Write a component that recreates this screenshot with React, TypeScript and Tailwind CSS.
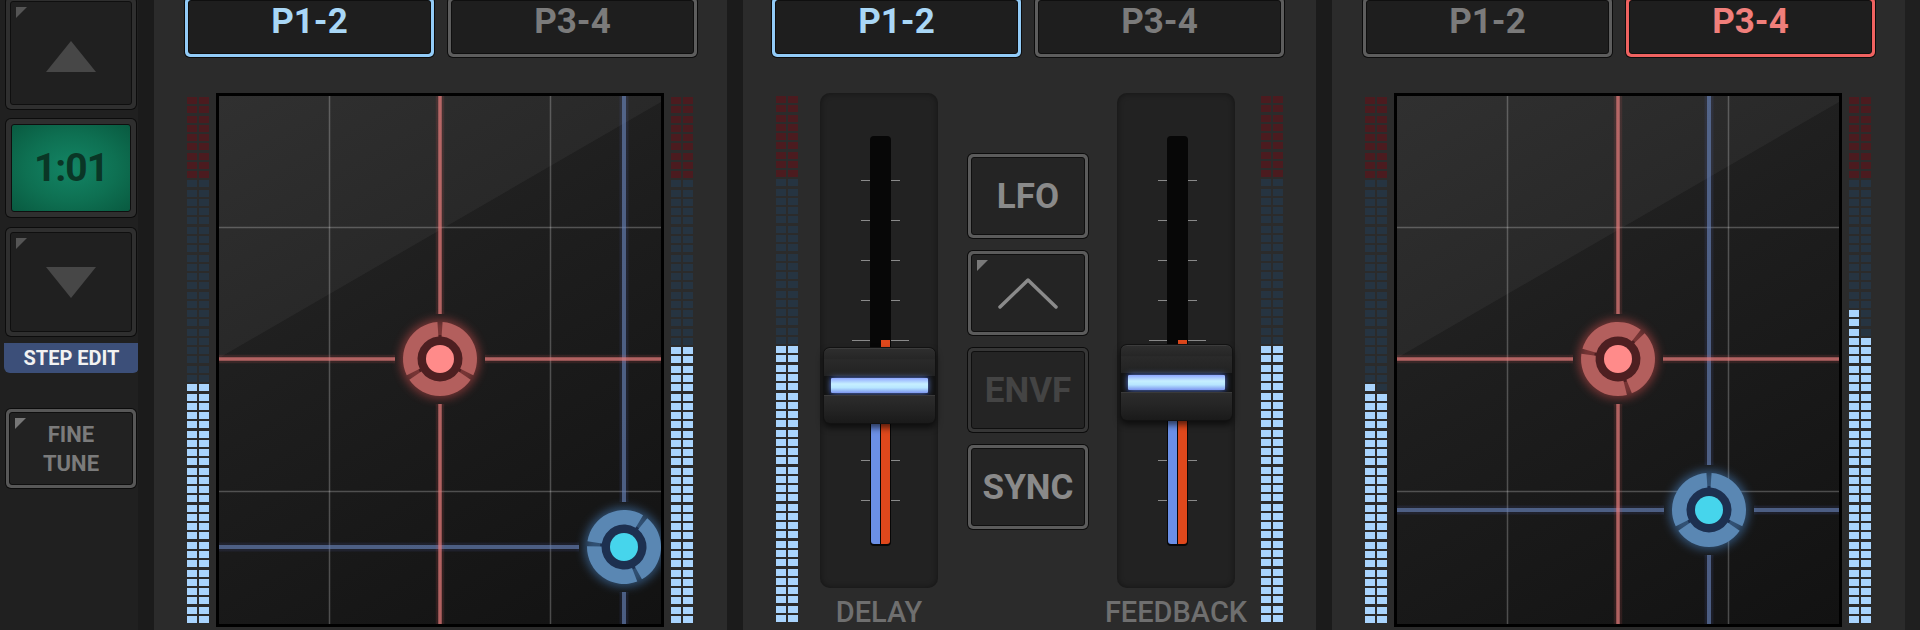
import React from 'react';

// meter layout
const SEG = 57;
const RED_SEGS = 9;

const arc = (cx: number, cy: number, r1: number, r2: number, a1: number, a2: number) => {
  const rad = (a: number) => (a * Math.PI) / 180;
  const p = (r: number, a: number) =>
    `${(cx + r * Math.cos(rad(a))).toFixed(2)} ${(cy + r * Math.sin(rad(a))).toFixed(2)}`;
  const large = a2 - a1 > 180 ? 1 : 0;
  return `M${p(r2, a1)} A${r2} ${r2} 0 ${large} 1 ${p(r2, a2)} L${p(r1, a2)} A${r1} ${r1} 0 ${large} 0 ${p(r1, a1)} Z`;
};

function MeterColumn({ lit }: { lit: number }) {
  return (
    <div className="flex h-full w-[10px] flex-col justify-between">
      {Array.from({ length: SEG }).map((_, i) => {
        const fromBottom = SEG - 1 - i;
        let cls = 'bg-[#263441]';
        if (i < RED_SEGS) cls = 'bg-[#4b1b1f]';
        if (fromBottom < lit) cls = 'bg-[#a9d4fd]';
        return <div key={i} className={`h-[7px] w-full ${cls}`} />;
      })}
    </div>
  );
}

function Meter({ lit }: { lit: [number, number] }) {
  return (
    <div className="flex h-[526px] shrink-0 gap-[2px]">
      <MeterColumn lit={lit[0]} />
      <MeterColumn lit={lit[1]} />
    </div>
  );
}

interface BevelProps {
  frame: string;
  inner?: string;
  pad?: string;
  className?: string;
  children?: React.ReactNode;
}

function Bevel({ frame, inner = 'bg-[#212121]', pad = 'p-[4px]', className = '', children }: BevelProps) {
  return (
    <div className={`shrink-0 rounded-[6px] bg-[#0c0c0c] p-px ${className}`}>
      <div className={`h-full rounded-[5px] ${pad} ${frame}`}>
        <div className={`relative flex h-full items-center justify-center rounded-[3px] border border-[#0f0f0f] ${inner}`}>
          {children}
        </div>
      </div>
    </div>
  );
}

const Corner = ({ color = 'border-t-[#555555]' }: { color?: string }) => (
  <div className={`absolute left-[5px] top-[5px] h-0 w-0 border-r-[11px] border-t-[11px] border-r-transparent ${color}`} />
);

function Tab({ label, active }: { label: string; active?: 'blue' | 'red' }) {
  const frame = active === 'blue' ? 'bg-[#92cbf7]' : active === 'red' ? 'bg-[#ef6260]' : 'bg-[#5d5d5d]';
  const text = active === 'blue' ? 'text-[#a9d7f6]' : active === 'red' ? 'text-[#f07f7b]' : 'text-[#7b7b7b]';
  return (
    <Bevel frame={frame} pad="p-[3px]" inner="bg-[#1e1e1e]" className="h-[62px] w-[251px]">
      <span className={`pb-[11px] text-[35px] font-bold leading-none ${text}`}>{label}</span>
    </Bevel>
  );
}

type PuckPos = { x: number; y: number; rot: number };

function Puck({ p, ring, dark, dot, glow, fid }: { p: PuckPos; ring: string; dark: string; dot: string; glow: string; fid: string }) {
  const segs = [0, 1, 2].map((i) => arc(p.x, p.y, 22.5, 37, p.rot + i * 120 + 4, p.rot + (i + 1) * 120 - 4));
  return (
    <g>
      <circle cx={p.x} cy={p.y} r={40} fill={glow} opacity={0.4} filter={`url(#${fid})`} />
      <circle cx={p.x} cy={p.y} r={24} fill={dark} />
      {segs.map((d, i) => (
        <path key={i} d={d} fill={ring} />
      ))}
      <circle cx={p.x} cy={p.y} r={14} fill={dot} />
    </g>
  );
}

function Cross({ p, color, glow, width, W, H }: { p: PuckPos; color: string; glow: string; width: number; W: number; H: number }) {
  const g = 45;
  const lines = (
    <>
      <line x1={p.x} y1={0} x2={p.x} y2={p.y - g} />
      <line x1={p.x} y1={p.y + g} x2={p.x} y2={H} />
      <line x1={0} y1={p.y} x2={p.x - g} y2={p.y} />
      <line x1={p.x + g} y1={p.y} x2={W} y2={p.y} />
    </>
  );
  return (
    <>
      <g stroke={glow} strokeWidth={width + 5}>{lines}</g>
      <g stroke={color} strokeWidth={width}>{lines}</g>
    </>
  );
}

function XYPad({ id, red, blue }: { id: string; red: PuckPos; blue: PuckPos }) {
  const W = 442;
  const H = 528;
  return (
    <div className="h-[534px] w-[448px] shrink-0 overflow-hidden border-[3px] border-black bg-[linear-gradient(150deg,#272727_0%,#1d1d1d_45%,#121212_100%)]">
      <svg width={W} height={H} viewBox={`0 0 ${W} ${H}`} className="block">
        <defs>
          <filter id={`${id}-glow`} x="-50%" y="-50%" width="200%" height="200%">
            <feGaussianBlur stdDeviation="5" />
          </filter>
        </defs>
        <polygon points={`0,0 ${W},0 ${W},6 0,262`} fill="#ffffff" opacity={0.045} />
        <g stroke="#ffffff" strokeOpacity={0.24} strokeWidth={1.5}>
          <line x1={110.5} y1={0} x2={110.5} y2={H} />
          <line x1={331.5} y1={0} x2={331.5} y2={H} />
          <line x1={0} y1={131.5} x2={W} y2={131.5} />
          <line x1={0} y1={395.5} x2={W} y2={395.5} />
        </g>
        <Cross p={blue} color="rgba(105,132,185,0.62)" glow="rgba(90,110,200,0.12)" width={4} W={W} H={H} />
        <Cross p={red} color="rgba(226,124,122,0.72)" glow="rgba(230,90,90,0.13)" width={3.5} W={W} H={H} />
        <Puck p={blue} ring="#5a87b3" dark="#1d3050" dot="#46d5ec" glow="#5aa8ff" fid={`${id}-glow`} />
        <Puck p={red} ring="#b35f5d" dark="#4e1f21" dot="#ff8b8a" glow="#ff5a5a" fid={`${id}-glow`} />
      </svg>
    </div>
  );
}

const TICKS = [87, 127, 167, 207, 287, 327, 367, 407];

function Fader({ capTop, label }: { capTop: number; label: string }) {
  return (
    <div className="flex w-[118px] shrink-0 flex-col items-center">
      <div className="relative h-[495px] w-[118px] rounded-[10px] bg-[#222222] shadow-[inset_0_0_6px_rgba(0,0,0,0.45)]">
        {TICKS.map((t) => (
          <React.Fragment key={t}>
            <div className="absolute left-[41px] h-px w-[9px] bg-[#8a8a8a]" style={{ top: t }} />
            <div className="absolute left-[71px] h-px w-[9px] bg-[#8a8a8a]" style={{ top: t }} />
          </React.Fragment>
        ))}
        <div className="absolute left-[32px] top-[247px] h-px w-[57px] bg-[#8a8a8a]" />
        <div className="absolute left-[50px] top-[43px] h-[410px] w-[21px] rounded-[4px] bg-[#070707]">
          <div className="absolute bottom-[2px] left-[1px] top-[260px] w-[9px] rounded-bl-[3px] bg-[#6b8fe6]" />
          <div className="absolute bottom-[2px] left-[11px] top-[204px] w-[9px] rounded-br-[3px] bg-[#df481c]" />
        </div>
        <div
          className="absolute left-[3px] flex h-[77px] w-[113px] flex-col rounded-[7px] bg-[#121212] p-px shadow-[0_4px_6px_rgba(0,0,0,0.6)]"
          style={{ top: capTop }}
        >
          <div className="h-[28px] rounded-t-[6px] border-t border-[#3c3c3c] bg-[linear-gradient(#2e2e2e,#262626_35%,#2a2a2a_40%,#222222)]" />
          <div className="mx-[5px] h-[19px] rounded-[2px] bg-[#0b0d1a] p-[2px]">
            <div className="h-full rounded-[1px] bg-[linear-gradient(#8fa8ff,#c6efff_40%,#b7e6ff_65%,#7d96f0)] shadow-[0_0_6px_rgba(120,160,255,0.8)]" />
          </div>
          <div className="flex-1 rounded-b-[6px] border-t border-[#3a3a3a] bg-[linear-gradient(#2c2c2c,#242424_50%,#1a1a1a)]" />
        </div>
      </div>
      <div className="mt-[10px] flex w-[118px] justify-center">
        <span className="whitespace-nowrap text-[29px] font-medium leading-none text-[#6f6f6f]">{label}</span>
      </div>
    </div>
  );
}

function DeckPanel({
  id,
  active,
  leftMeter,
  rightMeter,
  red,
  blue,
}: {
  id: string;
  active: 'blue' | 'red';
  leftMeter: [number, number];
  rightMeter: [number, number];
  red: PuckPos;
  blue: PuckPos;
}) {
  return (
    <div className="flex h-full w-[573px] shrink-0 flex-col bg-[#2b2b2b] px-[33px]">
      <div className="-mx-[3px] -mt-[4px] flex gap-[12px]">
        <Tab label="P1-2" active={active === 'blue' ? 'blue' : undefined} />
        <Tab label="P3-4" active={active === 'red' ? 'red' : undefined} />
      </div>
      <div className="mt-[35px] flex h-[534px] items-center gap-[7px]">
        <Meter lit={leftMeter} />
        <XYPad id={id} red={red} blue={blue} />
        <Meter lit={rightMeter} />
      </div>
    </div>
  );
}

function FxButton({ children, dim, corner }: { children: React.ReactNode; dim?: boolean; corner?: boolean }) {
  return (
    <Bevel
      frame={dim ? 'bg-[#363636]' : 'bg-[#5b5b5b]'}
      pad="p-[3px]"
      inner="bg-[#242424]"
      className="h-[86px] w-[122px]"
    >
      {corner && <Corner color="border-t-[#7a7a7a]" />}
      <span className={`text-[35px] font-bold leading-none ${dim ? 'text-[#444444]' : 'text-[#8a8a8a]'}`}>{children}</span>
    </Bevel>
  );
}

function CenterPanel() {
  return (
    <div className="flex h-full w-[573px] shrink-0 flex-col bg-[#2b2b2b] px-[33px]">
      <div className="-mx-[5px] -mt-[4px] flex gap-[12px]">
        <Tab label="P1-2" active="blue" />
        <Tab label="P3-4" />
      </div>
      <div className="mt-[35px] flex items-start">
        <div className="mt-[3px]">
          <Meter lit={[30, 30]} />
        </div>
        <div className="ml-[22px]">
          <Fader capTop={254} label="DELAY" />
        </div>
        <div className="ml-[29px] mt-[60px] flex flex-col gap-[11px]">
          <FxButton>LFO</FxButton>
          <FxButton corner>
            <svg width="62" height="33" viewBox="0 0 62 33" className="block">
              <polyline points="3,30 31,3 59,30" fill="none" stroke="#8a8a8a" strokeWidth="3.5" strokeLinecap="round" strokeLinejoin="round" />
            </svg>
          </FxButton>
          <FxButton dim>ENVF</FxButton>
          <FxButton>SYNC</FxButton>
        </div>
        <div className="ml-[28px]">
          <Fader capTop={251} label="FEEDBACK" />
        </div>
        <div className="ml-[26px] mt-[3px]">
          <Meter lit={[30, 30]} />
        </div>
      </div>
    </div>
  );
}

function SideColumn() {
  return (
    <div className="flex h-full w-[138px] shrink-0 flex-col bg-[#202020] pl-[5px]">
      <Bevel frame="bg-[#2f2f2f]" inner="bg-[#202020]" className="-mt-[4px] h-[114px] w-[132px]">
        <Corner />
        <div className="mt-[6px] h-0 w-0 border-b-[31px] border-l-[25px] border-r-[25px] border-b-[#474747] border-l-transparent border-r-transparent" />
      </Bevel>
      <Bevel
        frame="bg-[#2f2f2f]"
        pad="p-[5px]"
        inner="bg-[radial-gradient(ellipse_at_center,#138565_0%,#0e7052_55%,#095a40_100%)]"
        className="mt-[8px] h-[100px] w-[132px]"
      >
        <span className="text-[39px] font-bold leading-none tracking-[-1px] text-[#0a3626]">1:01</span>
      </Bevel>
      <Bevel frame="bg-[#2f2f2f]" inner="bg-[#202020]" className="mt-[9px] h-[110px] w-[132px]">
        <Corner />
        <div className="h-0 w-0 border-l-[25px] border-r-[25px] border-t-[31px] border-l-transparent border-r-transparent border-t-[#474747]" />
      </Bevel>
      <div className="-ml-[1px] mt-[6px] flex h-[30px] w-[135px] items-center justify-center rounded-b-[6px] bg-[#3c4f79]">
        <span className="text-[20px] font-bold leading-none text-[#f2f2f2]">STEP EDIT</span>
      </div>
      <Bevel frame="bg-[#575757]" pad="p-[3px]" inner="bg-[#222222]" className="mt-[35px] h-[81px] w-[132px]">
        <Corner color="border-t-[#777777]" />
        <div className="flex flex-col items-center text-[22px] font-bold leading-[29px] text-[#7b7b7b]">
          <span>FINE</span>
          <span>TUNE</span>
        </div>
      </Bevel>
    </div>
  );
}

export default function App() {
  return (
    <div className="flex h-[630px] w-[1920px] overflow-hidden bg-[#1b1b1b] font-[Roboto,sans-serif]">
      <SideColumn />
      <div className="w-[16px] shrink-0 bg-[#1b1b1b]" />
      <DeckPanel
        id="padA"
        active="blue"
        leftMeter={[26, 26]}
        rightMeter={[30, 30]}
        red={{ x: 221, y: 263, rot: -90 }}
        blue={{ x: 405, y: 451, rot: -55 }}
      />
      <div className="w-[16px] shrink-0 bg-[#1b1b1b]" />
      <CenterPanel />
      <div className="w-[16px] shrink-0 bg-[#1b1b1b]" />
      <DeckPanel
        id="padB"
        active="red"
        leftMeter={[26, 25]}
        rightMeter={[34, 31]}
        red={{ x: 221, y: 263, rot: -48 }}
        blue={{ x: 312, y: 414, rot: -90 }}
      />
      <div className="w-[15px] shrink-0 bg-[#1f1f1f]" />
    </div>
  );
}
